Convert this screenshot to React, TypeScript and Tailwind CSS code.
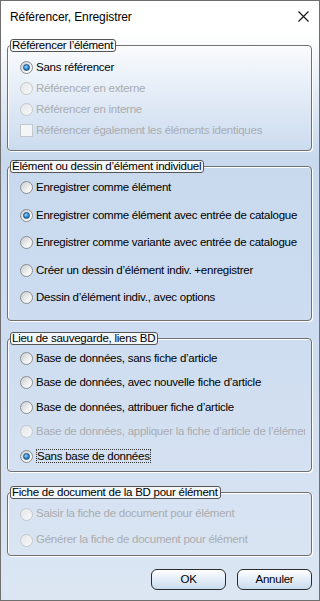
import type { ReactNode } from "react";

type Item = {
  label: string;
  checked?: boolean;
  disabled?: boolean;
  box?: boolean;
  focus?: boolean;
};

function Radio({ checked, disabled }: { checked?: boolean; disabled?: boolean }) {
  return (
    <span
      className={`flex h-[13px] w-[13px] shrink-0 items-center justify-center rounded-full border ${
        disabled
          ? "border-[#c4c8cc] bg-[linear-gradient(135deg,#e4e6e8,#f7f8f9)]"
          : "border-[#8a8d90] bg-[linear-gradient(135deg,#c9cbcd,#f6f6f6_70%,#ffffff)]"
      }`}
    >
      {checked && (
        <span className="h-[7px] w-[7px] rounded-full border border-[#1b4f7f] bg-[radial-gradient(circle_at_40%_35%,#9fd4ff,#2c88cf_55%,#145c9c)]" />
      )}
    </span>
  );
}

function Check({ disabled }: { disabled?: boolean }) {
  return (
    <span
      className={`h-[13px] w-[13px] shrink-0 border ${
        disabled ? "border-[#c4c8cc] bg-[#f4f5f6]" : "border-[#8a8d90] bg-white"
      }`}
    />
  );
}

function Group({
  title,
  items,
  className,
  rowClass,
}: {
  title: string;
  items: Item[];
  className: string;
  rowClass: string;
}) {
  return (
    <div
      className={`relative rounded-[4px] border border-[#707070] pl-[12px] pr-[6px] shadow-[1px_1px_0_#ffffff,inset_1px_1px_0_#ffffff] ${className}`}
    >
      <div className="absolute left-[2px] top-[-7px] rounded-[3px] border border-[#555] bg-[#f3f6fa] pl-[1px] pr-[2px] text-[11.5px] leading-[11px] text-black">
        {title}
      </div>
      <div className="flex flex-col overflow-hidden">
        {items.map((it) => (
          <Row key={it.label} item={it} rowClass={rowClass} />
        ))}
      </div>
    </div>
  );
}

function Row({ item, rowClass }: { item: Item; rowClass: string }) {
  const text: ReactNode = item.focus ? (
    <span className="border border-dotted border-[#333] px-0 leading-[12px]">{item.label}</span>
  ) : (
    item.label
  );
  return (
    <div className={`flex items-center gap-[3px] whitespace-nowrap ${rowClass}`}>
      {item.box ? (
        <Check disabled={item.disabled} />
      ) : (
        <Radio checked={item.checked} disabled={item.disabled} />
      )}
      <span className={item.disabled ? "text-[#a9acb0]" : "text-black"}>{text}</span>
    </div>
  );
}

export default function App() {
  return (
    <div className="flex h-[601px] w-[320px] flex-col border border-[#6f6f6f] font-['Liberation_Sans',Arial,sans-serif] text-[11.5px] tracking-[-0.25px]">
      <div className="flex h-[31px] shrink-0 items-center justify-between bg-white pl-[9px] pr-[10px]">
        <span className="text-[12px] tracking-[-0.1px] text-black">Référencer, Enregistrer</span>
        <svg width="11" height="11" viewBox="0 0 11 11">
          <path d="M0.5 0.5 L10.5 10.5 M10.5 0.5 L0.5 10.5" stroke="#111" strokeWidth="1.1" />
        </svg>
      </div>
      <div className="flex flex-1 flex-col bg-[linear-gradient(180deg,#ffffff_0px,#c8d9ee_125px,#cddcf0_300px,#dce6f3_100%)] pl-[6px] pr-[7px] pt-[13px]">
        <Group
          title="Référencer l’élément"
          className="h-[106px] pt-[11px]"
          rowClass="h-[21px]"
          items={[
            { label: "Sans référencer", checked: true },
            { label: "Référencer en externe", disabled: true },
            { label: "Référencer en interne", disabled: true },
            { label: "Référencer également les éléments identiques", disabled: true, box: true },
          ]}
        />
        <Group
          title="Élément ou dessin d’élément individuel"
          className="mt-[15px] h-[155px] pt-[7px]"
          rowClass="h-[27.5px]"
          items={[
            { label: "Enregistrer comme élément" },
            { label: "Enregistrer comme élément avec entrée de catalogue", checked: true },
            { label: "Enregistrer comme variante avec entrée de catalogue" },
            { label: "Créer un dessin d’élément indiv. +enregistrer" },
            { label: "Dessin d’élément indiv., avec options" },
          ]}
        />
        <Group
          title="Lieu de sauvegarde, liens BD"
          className="mt-[17px] h-[134px] pt-[7px]"
          rowClass="h-[24.5px]"
          items={[
            { label: "Base de données, sans fiche d’article" },
            { label: "Base de données, avec nouvelle fiche d’article" },
            { label: "Base de données, attribuer fiche d’article" },
            { label: "Base de données, appliquer la fiche d’article de l’élément", disabled: true },
            { label: "Sans base de données", checked: true, focus: true },
          ]}
        />
        <Group
          title="Fiche de document de la BD pour élément"
          className="mt-[20px] h-[64px] pt-[8px]"
          rowClass="h-[26px]"
          items={[
            { label: "Saisir la fiche de document pour élément", disabled: true },
            { label: "Générer la fiche de document pour élément", disabled: true },
          ]}
        />
        <div className="mt-[13px] flex justify-end gap-[11px]">
          {["OK", "Annuler"].map((b) => (
            <button
              key={b}
              className="flex h-[21px] w-[75px] items-center justify-center rounded-[6px] border border-[#2b2b2b] bg-[linear-gradient(180deg,#ffffff,#e6eef8_45%,#c9dbf0)] text-[11.5px] text-black"
            >
              {b}
            </button>
          ))}
        </div>
      </div>
    </div>
  );
}
